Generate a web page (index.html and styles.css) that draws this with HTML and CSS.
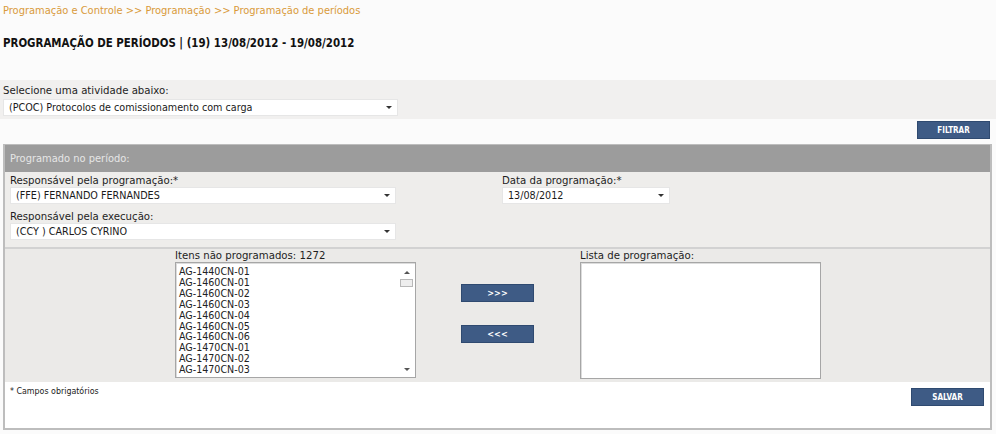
FILE: index.html
```html
<!DOCTYPE html>
<html lang="pt-BR">

<head>
  <meta charset="UTF-8" />
  <title>Programação de períodos</title>
  <link rel="stylesheet" href="styles.css">
</head>

<body>
  <div class="crumbs">Programação e Controle &gt;&gt; Programação &gt;&gt; Programação de períodos</div>
  <h1 class="title">PROGRAMAÇÃO DE PERÍODOS | (19) 13/08/2012 - 19/08/2012</h1>

  <div class="activity">
    <div class="label">Selecione uma atividade abaixo:</div>
    <div class="select select-activity">
      <span>(PCOC) Protocolos de comissionamento com carga</span>
      <i class="caret"></i>
    </div>
  </div>

  <div class="actions">
    <button class="btn">FILTRAR</button>
  </div>

  <div class="panel">
    <div class="panel-head">Programado no período:</div>

    <div class="panel-form">
      <div class="col col-left">
        <div class="label">Responsável pela programação:*</div>
        <div class="select">
          <span>(FFE) FERNANDO FERNANDES</span>
          <i class="caret"></i>
        </div>
        <div class="label label-gap">Responsável pela execução:</div>
        <div class="select">
          <span>(CCY ) CARLOS CYRINO</span>
          <i class="caret"></i>
        </div>
      </div>
      <div class="col col-right">
        <div class="label">Data da programação:*</div>
        <div class="select">
          <span>13/08/2012</span>
          <i class="caret"></i>
        </div>
      </div>
    </div>

    <div class="panel-lists">
      <div class="list-col">
        <div class="label">Itens não programados: 1272</div>
        <div class="listbox">
          <ul class="items">
            <li>AG-1440CN-01</li>
            <li>AG-1460CN-01</li>
            <li>AG-1460CN-02</li>
            <li>AG-1460CN-03</li>
            <li>AG-1460CN-04</li>
            <li>AG-1460CN-05</li>
            <li>AG-1460CN-06</li>
            <li>AG-1470CN-01</li>
            <li>AG-1470CN-02</li>
            <li>AG-1470CN-03</li>
          </ul>
          <div class="scrollbar">
            <span class="arrow up"></span>
            <span class="thumb"></span>
            <span class="arrow down"></span>
          </div>
        </div>
      </div>

      <div class="move">
        <button class="btn btn-move">&gt;&gt;&gt;</button>
        <button class="btn btn-move">&lt;&lt;&lt;</button>
      </div>

      <div class="list-col">
        <div class="label">Lista de programação:</div>
        <div class="listbox listbox-empty"></div>
      </div>
    </div>

    <div class="panel-foot">
      <div class="note">* Campos obrigatórios</div>
      <button class="btn btn-save">SALVAR</button>
    </div>
  </div>
</body>

</html>
```

FILE: styles.css
```css
/* Global Styles */
* {
  box-sizing: border-box;
  margin: 0;
  padding: 0;
}

body {
  background: #fbfbfb;
  font-family: "DejaVu Sans", Verdana, sans-serif;
  font-stretch: condensed;
  font-size: 11px;
  color: #1a1a1a;
}

.crumbs {
  padding: 4px 3px 0;
  height: 26px;
  color: #d99a3a;
  font-size: 11px;
}

.title {
  padding: 10px 3px 0;
  height: 54px;
  font-size: 11.4px;
  font-weight: bold;
  color: #111111;
}

.label {
  font-size: 11.3px;
  line-height: 13px;
  color: #1e1e1e;
}

/* Selects */
.select {
  display: flex;
  align-items: center;
  justify-content: space-between;
  height: 17px;
  padding: 0 5px;
  background: #ffffff;
  border: 1px solid #e6e6e6;
  font-size: 10.7px;
}

.caret {
  width: 0;
  height: 0;
  border-left: 3px solid transparent;
  border-right: 3px solid transparent;
  border-top: 3px solid #333333;
}

/* Activity selector */
.activity {
  background: #f1f0ef;
  padding: 4px 3px 2px;
  height: 39px;
}

.select-activity {
  width: 395px;
  margin-top: 2px;
}

.actions {
  display: flex;
  justify-content: flex-end;
  padding: 2px 6px 0 0;
  height: 25px;
}

.btn {
  background: #3e5b85;
  color: #ffffff;
  border: 1px solid #2f4a70;
  font-family: "DejaVu Sans", Verdana, sans-serif;
  font-stretch: condensed;
  font-size: 8px;
  font-weight: bold;
  width: 73px;
  height: 18px;
  cursor: pointer;
}

/* Panel */
.panel {
  margin: 0 4px 0 3px;
  border: 2px solid #bdbdbd;
  border-top-width: 1px;
  height: 286px;
  background: #ffffff;
}

.panel-head {
  height: 27px;
  background: #9c9c9c;
  color: #e6e6e6;
  padding: 7px 5px 0;
}

.panel-form {
  display: flex;
  height: 77px;
  background: #eeedeb;
  padding: 2px 5px 0;
  border-bottom: 2px solid #d2d2d2;
}

.col-left {
  width: 386px;
}

.col-right {
  margin-left: 106px;
  width: 168px;
}

.label-gap {
  margin-top: 6px;
}

/* Lists */
.panel-lists {
  display: flex;
  height: 133px;
  background: #ebeae8;
  padding: 0 0 0 170px;
}

.listbox {
  display: flex;
  width: 241px;
  height: 116px;
  background: #ffffff;
  border: 1px solid #a6a6a6;
  box-shadow: inset 1px 1px 0 #dcdcdc;
}

.listbox-empty {
  width: 241px;
  height: 117px;
}

.items {
  list-style: none;
  flex: 1;
  padding: 3px 0 0 3px;
  font-size: 10.6px;
  line-height: 10.9px;
  color: #222222;
}

.scrollbar {
  display: flex;
  flex-direction: column;
  align-items: center;
  width: 17px;
  padding: 8px 0 6px;
}

.thumb {
  width: 13px;
  height: 8px;
  margin-top: 5px;
  border: 1px solid #b8b8b8;
  background: #eeeeee;
}

.arrow {
  width: 0;
  height: 0;
  border-left: 3px solid transparent;
  border-right: 3px solid transparent;
}

.arrow.up {
  border-bottom: 3px solid #555555;
}

.arrow.down {
  border-top: 3px solid #555555;
  margin-top: auto;
}

.move {
  display: flex;
  flex-direction: column;
  gap: 23px;
  padding: 35px 0 0;
  margin: 0 46px 0 45px;
}

.btn-move {
  font-size: 9px;
}

/* Footer */
.panel-foot {
  display: flex;
  justify-content: space-between;
  padding: 4px 6px 0 5px;
}

.note {
  font-size: 8.8px;
}

.btn-save {
  margin-top: 2px;
}
```
